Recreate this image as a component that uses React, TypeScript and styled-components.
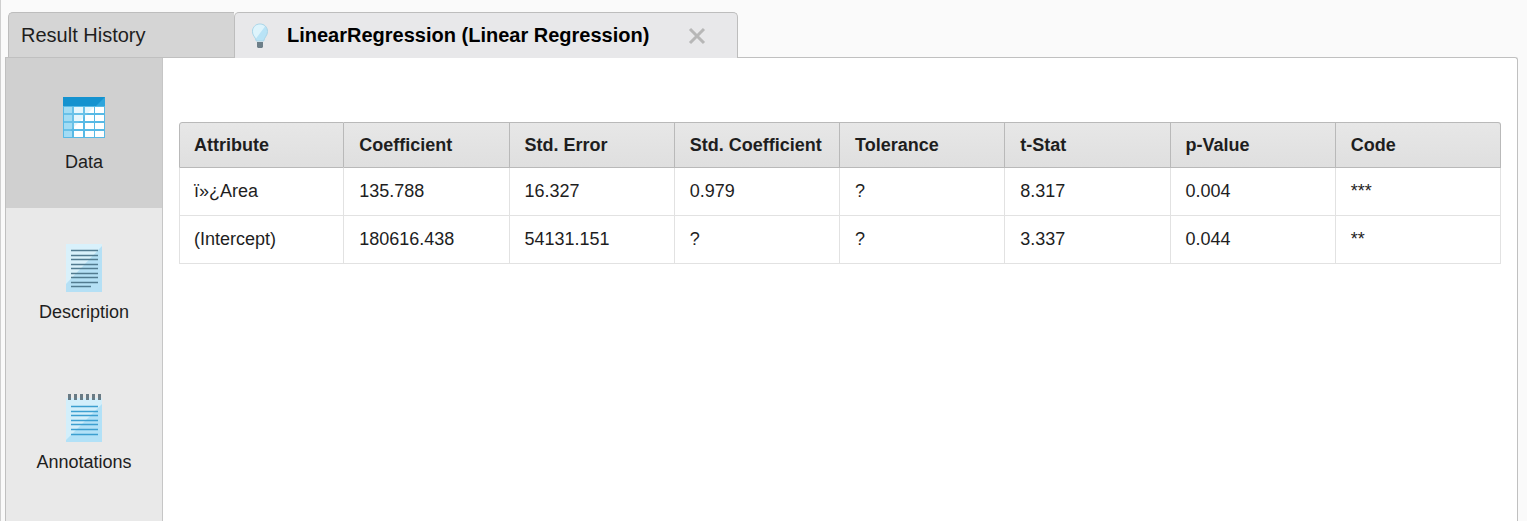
import React, { useState } from "react";
import styled, { createGlobalStyle } from "styled-components";

const GlobalStyle = createGlobalStyle`
  *, *::before, *::after { box-sizing: border-box; }
  body {
    margin: 0;
    background: #fafafa;
    color: #1e1e1e;
    font-family: "Liberation Sans", Arial, sans-serif;
    font-size: 18px;
  }
  button { font: inherit; color: inherit; cursor: pointer; }
`;

const Window = styled.div`
  display: flex;
  flex-direction: column;
  min-height: 100vh;
  padding: 12px 9px 0 4px;
  border-left: 1px solid #cfcfcf;
`;

const TabBar = styled.div`
  display: flex;
  height: 45px;
  padding-left: 3px;
`;

const Tab = styled.div<{ $active?: boolean }>`
  display: flex;
  align-items: center;
  width: ${(p) => (p.$active ? 504 : 226)}px;
  border: 1px solid #bdbdbd;
  border-bottom: 0;
  border-right-width: ${(p) => (p.$active ? 1 : 0)}px;
  border-radius: ${(p) => (p.$active ? "5px 5px 0 0" : "5px 0 0 0")};
  background: ${(p) => (p.$active ? "#e8e8ea" : "#d5d5d5")};
  margin-bottom: ${(p) => (p.$active ? -1 : 0)}px;
  z-index: ${(p) => (p.$active ? 1 : 0)};
`;

const TabLabel = styled.button<{ $active?: boolean }>`
  display: flex;
  flex: 1;
  align-items: center;
  gap: 18px;
  height: 100%;
  padding: 0 0 0 ${(p) => (p.$active ? 16 : 12)}px;
  border: 0;
  background: none;
  font-size: 20px;
  font-weight: ${(p) => (p.$active ? 700 : 400)};
  color: ${(p) => (p.$active ? "#000" : "#1e1e1e")};
  white-space: nowrap;
`;

const CloseButton = styled.button`
  display: flex;
  margin-right: 31px;
  padding: 0;
  border: 0;
  background: none;
`;

const Panel = styled.main`
  display: flex;
  flex: 1;
  border: 1px solid #c0c0c0;
  border-bottom: 0;
  border-radius: 0 3px 0 0;
  background: #fff;
`;

const SideBar = styled.nav`
  flex: none;
  width: 157px;
  border-right: 1px solid #c6c6c6;
  background: #e9e9e9;
`;

const SideItem = styled.button<{ $active: boolean }>`
  display: flex;
  flex-direction: column;
  align-items: center;
  gap: 10px;
  width: 100%;
  height: 150px;
  padding: 36px 0 0;
  border: 0;
  background: ${(p) => (p.$active ? "#d0d0d0" : "transparent")};
  line-height: 20px;
`;

const Content = styled.section`
  flex: 1;
  min-width: 0;
  padding: 64px 16px 24px;
`;

const Table = styled.table`
  width: 100%;
  table-layout: fixed;
  border-collapse: separate;
  border-spacing: 0;
  text-align: left;
`;

const HeadCell = styled.th`
  height: 46px;
  padding: 0 0 0 15px;
  border: solid #b9b9b9;
  border-width: 1px 1px 1px 0;
  background: linear-gradient(#e7e7e7, #dfdfdf);
  font-weight: 700;
  white-space: nowrap;
  &:first-child { padding-left: 14px; border-left-width: 1px; border-top-left-radius: 3px; }
  &:last-child { border-top-right-radius: 3px; }
`;

const Cell = styled.td`
  height: 48px;
  padding: 0 0 0 15px;
  border: solid #e2e2e2;
  border-width: 0 1px 1px 0;
  white-space: nowrap;
  &:first-child { padding-left: 14px; border-left-width: 1px; }
`;

const BulbIcon = () => (
  <svg width="18" height="26" viewBox="0 0 18 26" aria-hidden="true">
    <path d="M9 1C4.500 1 1.500 4.300 1.500 8.500c0 4 3 5.500 3.800 9.500h7.400c.8-4 3.800-5.500 3.800-9.500C16.500 4.300 13.500 1 9 1z" fill="#b9e3f6" stroke="#a9d5e8" />
    <path d="M9 1.500C4.800 1.500 2 4.500 2 8.500c0 3.500 2 4.800 3 7L14 3.500C12.700 2.200 11 1.500 9 1.500z" fill="#def4fc" />
    <path d="M6 19h6v5l-1 1H7l-1-1z" fill="#6d7f89" />
  </svg>
);

const CloseIcon = () => (
  <svg width="18" height="18" viewBox="0 0 18 18" aria-hidden="true">
    <path d="M2 2l14 14M16 2L2 16" stroke="#b7b7b7" strokeWidth="3" />
  </svg>
);

const DataIcon = () => (
  <svg width="42" height="48" viewBox="0 0 42 48" aria-hidden="true">
    <rect y="3" width="42" height="41" fill="#58b9e5" />
    <path d="M0 3h42v9H0z" fill="#1492cf" />
    <path d="M42 3v9H33z" fill="#2da5dc" />
    <g fill="#fff">
      {[13, 21, 29, 37].map((y) =>
        [11, 22, 32].map((x) => <rect key={`${x}-${y}`} x={x} y={y} width={9} height={6} />)
      )}
    </g>
    <g fill="#a4dcf5">
      {[13, 21, 29, 37].map((y) => (
        <rect key={y} x="1" y={y} width="8" height={6} />
      ))}
    </g>
    <path d="M0 44L31 13H1v31z" fill="#9cdcf5" opacity=".25" />
  </svg>
);

const DescriptionIcon = () => (
  <svg width="38" height="48" viewBox="0 0 38 48" aria-hidden="true">
    <path d="M1 0h36v48H1z" fill="#d9f1fb" />
    <path d="M37 2v46H1v-8z" fill="#b5e0f5" />
    <path d="M6 6.500h27M6 11.500h27M6 15.500h27M6 20.500h27M6 24.500h27M6 29.500h27M6 33.500h27M6 38.500h27M6 42.500h20" stroke="#527b90" strokeWidth="1.500" />
  </svg>
);

const AnnotationsIcon = () => (
  <svg width="38" height="48" viewBox="0 0 38 48" aria-hidden="true">
    <path d="M1 4h36v44H1z" fill="#d3effb" />
    <path d="M37 10v38H1v-2z" fill="#b2e1f7" />
    <path d="M3 0h3v6H3zM9 0h3v6H9zM15 0h3v6h-3zM21 0h3v6h-3zM27 0h3v6h-3zM33 0h3v6h-3z" fill="#697b85" />
    <path d="M6 12.500h27M6 17.500h27M6 21.500h27M6 26.500h27M6 30.500h27M6 35.500h27M6 40.500h27" stroke="#3c9fd0" strokeWidth="1.500" />
  </svg>
);

const views = [
  { name: "Data", Icon: DataIcon },
  { name: "Description", Icon: DescriptionIcon },
  { name: "Annotations", Icon: AnnotationsIcon },
];

const columns = ["Attribute", "Coefficient", "Std. Error", "Std. Coefficient", "Tolerance", "t-Stat", "p-Value", "Code"];

const rows = [
  ["ï»¿Area", "135.788", "16.327", "0.979", "?", "8.317", "0.004", "***"],
  ["(Intercept)", "180616.438", "54131.151", "?", "?", "3.337", "0.044", "**"],
];

export default function App() {
  const [view, setView] = useState("Data");
  return (
    <>
      <GlobalStyle />
      <Window>
        <TabBar>
          <Tab>
            <TabLabel type="button">Result History</TabLabel>
          </Tab>
          <Tab $active>
            <TabLabel type="button" $active>
              <BulbIcon />
              LinearRegression (Linear Regression)
            </TabLabel>
            <CloseButton type="button" aria-label="Close tab">
              <CloseIcon />
            </CloseButton>
          </Tab>
        </TabBar>
        <Panel>
          <SideBar>
            {views.map(({ name, Icon }) => (
              <SideItem key={name} type="button" $active={view === name} onClick={() => setView(name)}>
                <Icon />
                {name}
              </SideItem>
            ))}
          </SideBar>
          <Content>
            <Table>
              <thead>
                <tr>
                  {columns.map((c) => (
                    <HeadCell key={c} scope="col">{c}</HeadCell>
                  ))}
                </tr>
              </thead>
              <tbody>
                {rows.map((row) => (
                  <tr key={row[0]}>
                    {row.map((value, i) => (
                      <Cell key={columns[i]}>{value}</Cell>
                    ))}
                  </tr>
                ))}
              </tbody>
            </Table>
          </Content>
        </Panel>
      </Window>
    </>
  );
}
